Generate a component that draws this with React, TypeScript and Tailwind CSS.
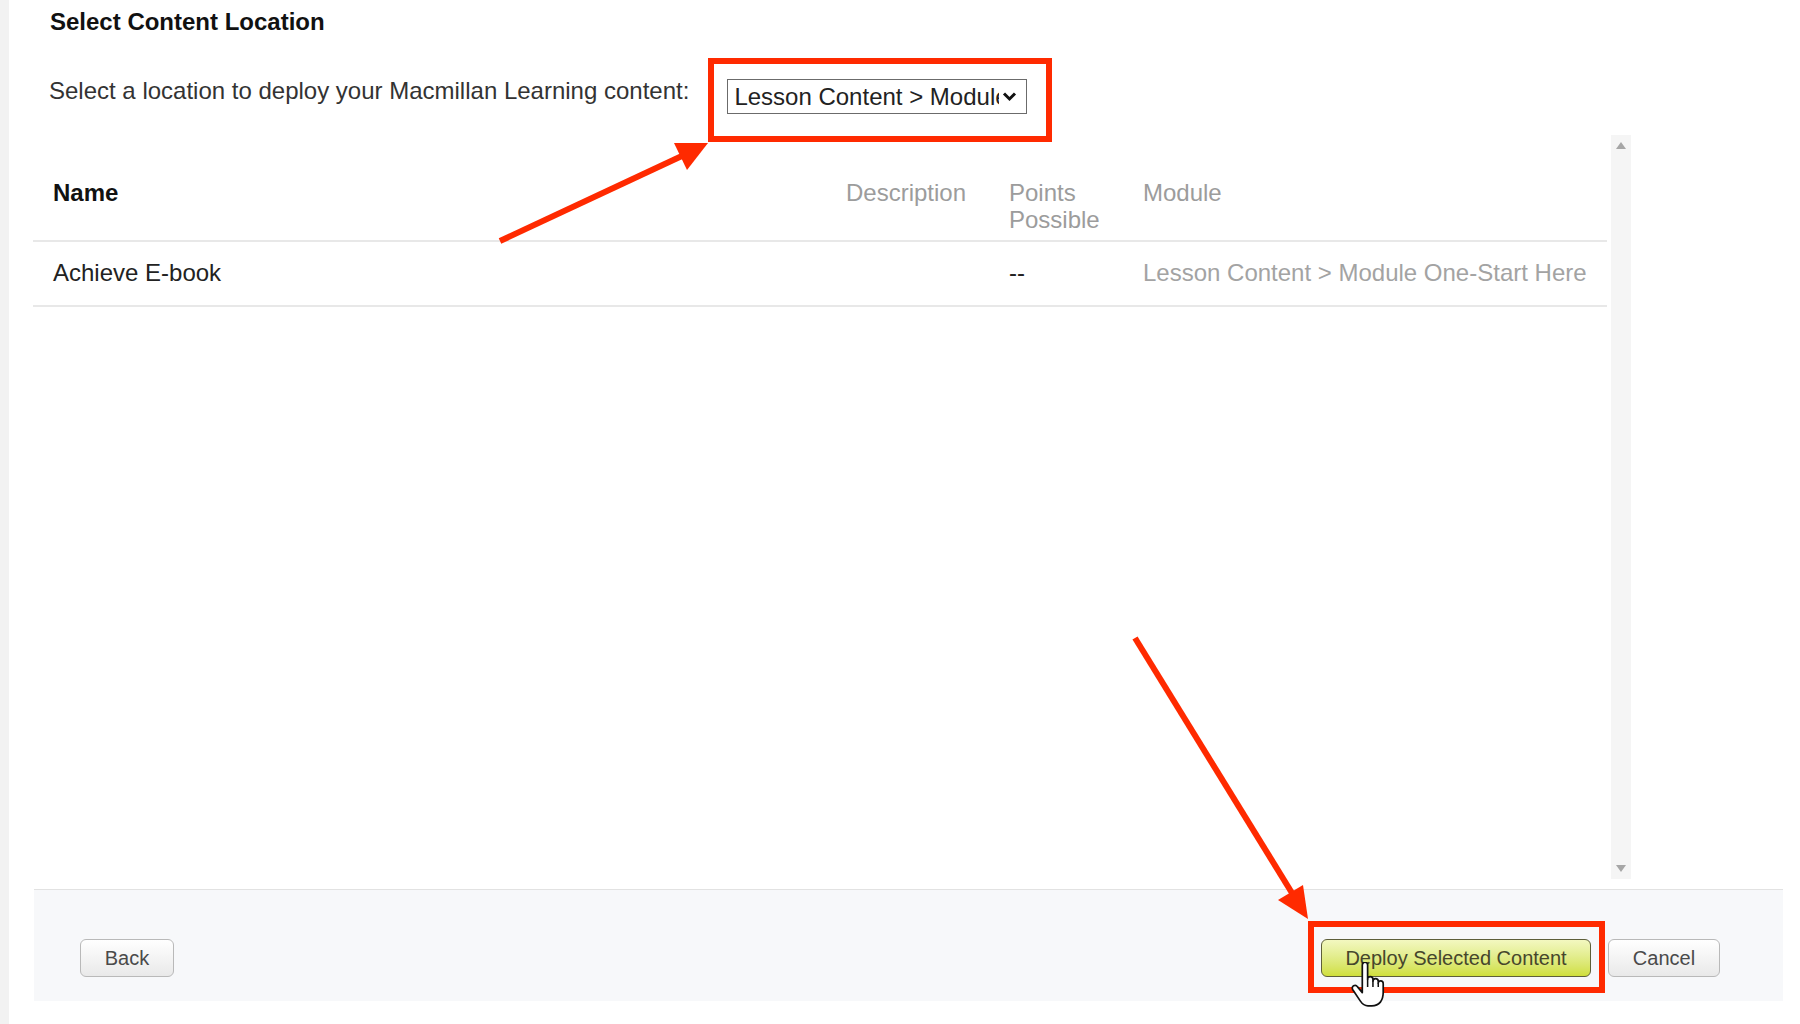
import React from "react";

function HandCursor() {
  return (
    <svg
      className="absolute left-[1349px] top-[962px] pointer-events-none"
      width="38"
      height="46"
      viewBox="0 0 20 24"
    >
      <path
        d="M7 1.5C7 .7 7.6 0 8.4 0S9.8.7 9.8 1.5V9C9.8 8.2 10.4 7.6 11.2 7.6S12.6 8.2 12.6 9V10C12.6 9.2 13.2 8.6 14 8.6S15.4 9.2 15.4 10V11C15.4 10.2 16 9.8 16.7 9.8S18 10.4 18 11.2V16C18 20 16 23 12 23H10C8 23 7 22 6 20.5L2 14.5C1.5 13.7 1.7 12.8 2.4 12.4S4 12.2 4.5 13L7 16Z"
        fill="#fff"
        stroke="#111"
        strokeWidth="0.9"
        strokeLinejoin="round"
      />
      <path d="M9.8 9V13M12.6 10V13M15.4 11V13" stroke="#111" strokeWidth="0.8" />
    </svg>
  );
}

function Annotations() {
  return (
    <svg className="absolute inset-0 pointer-events-none" width="1800" height="1024">
      <rect x="711" y="61" width="338" height="78" fill="none" stroke="#ff2a00" strokeWidth="6" />
      <rect x="1311" y="924" width="291" height="66" fill="none" stroke="#ff2a00" strokeWidth="6" />
      <line x1="500" y1="241" x2="684" y2="155" stroke="#ff2a00" strokeWidth="6" />
      <polygon points="708,143 674,143 687,170" fill="#ff2a00" />
      <line x1="1135" y1="638" x2="1292" y2="893" stroke="#ff2a00" strokeWidth="6" />
      <polygon points="1308,919 1303,885 1278,900" fill="#ff2a00" />
    </svg>
  );
}

function Button({ label, primary, width }: { label: string; primary?: boolean; width: string }) {
  return (
    <button
      className={
        primary
          ? `${width} h-[38px] rounded-[6px] border border-[#5e5f3a] bg-gradient-to-b from-[#f3f8c0] to-[#d0df3a] text-[20px] text-[#46462c]`
          : `${width} h-[38px] rounded-[6px] border border-[#b9b9b9] bg-gradient-to-b from-white to-[#e9e9e9] text-[20px] text-[#4a4a4a]`
      }
    >
      {label}
    </button>
  );
}

export default function App() {
  return (
    <div className="relative w-[1800px] h-[1024px] bg-white flex overflow-hidden font-['Liberation_Sans',Arial,sans-serif]">
      <div className="w-[9px] h-full bg-[#f2f2f2]" />
      <div className="flex flex-col">
        <h2 className="ml-[41px] mt-[8px] text-[24px] leading-[28px] font-bold text-[#111]">
          Select Content Location
        </h2>
        <div className="ml-[40px] mt-[41px] flex items-start gap-[38px]">
          <p className="text-[24px] leading-[28px] text-[#333]">
            Select a location to deploy your Macmillan Learning content:
          </p>
          <div className="mt-[2px] w-[300px] h-[35px] border border-[#6b6b6b] bg-white flex items-center">
            <span className="ml-[6px] w-[265px] overflow-hidden whitespace-nowrap text-[24px] leading-[28px] text-[#222]">
              Lesson Content &gt; Module One-Start Here
            </span>
            <svg width="15" height="11" viewBox="0 0 15 11" className="ml-[3px]">
              <path d="M2 2.5L7.5 8L13 2.5" fill="none" stroke="#111" strokeWidth="3" />
            </svg>
          </div>
        </div>

        <div className="mt-[21px] h-[744px] flex">
          <div className="ml-[24px] w-[1574px]">
            <div className="grid grid-cols-[793px_163px_134px_484px] pb-[7px] border-b-2 border-[#e8e8e8] text-[24px] leading-[27px]">
              <div className="pl-[20px] pt-[44px] font-bold text-[#111]">Name</div>
              <div className="pl-[20px] pt-[44px] text-[#9c9c9c]">Description</div>
              <div className="pl-[20px] pt-[44px] text-[#9c9c9c]">Points Possible</div>
              <div className="pl-[20px] pt-[44px] text-[#9c9c9c]">Module</div>
            </div>
            <div className="grid grid-cols-[793px_163px_134px_484px] pt-[17px] pb-[19px] border-b-2 border-[#e8e8e8] text-[24px] leading-[27px]">
              <div className="pl-[20px] text-[#222]">Achieve E-book</div>
              <div className="pl-[20px]" />
              <div className="pl-[20px] text-[#222]">--</div>
              <div className="pl-[20px] text-[#a3a3a3] whitespace-nowrap">
                Lesson Content &gt; Module One-Start Here
              </div>
            </div>
          </div>
          <div className="ml-[4px] w-[20px] h-full bg-[#f5f5f5] flex flex-col items-center justify-between py-[7px]">
            <svg width="10" height="7" viewBox="0 0 10 7">
              <path d="M5 0L10 7H0Z" fill="#a6a6a6" />
            </svg>
            <svg width="10" height="7" viewBox="0 0 10 7">
              <path d="M0 0H10L5 7Z" fill="#a6a6a6" />
            </svg>
          </div>
        </div>

        <div className="mt-[10px] ml-[25px] w-[1749px] h-[112px] border-t border-[#e2e2e2] bg-[#f7f8fa] flex items-start pt-[49px] pl-[46px] pr-[63px]">
          <Button label="Back" width="w-[94px]" />
          <div className="ml-auto flex gap-[17px]">
            <Button label="Deploy Selected Content" primary width="w-[270px]" />
            <Button label="Cancel" width="w-[112px]" />
          </div>
        </div>
      </div>
      <Annotations />
      <HandCursor />
    </div>
  );
}
